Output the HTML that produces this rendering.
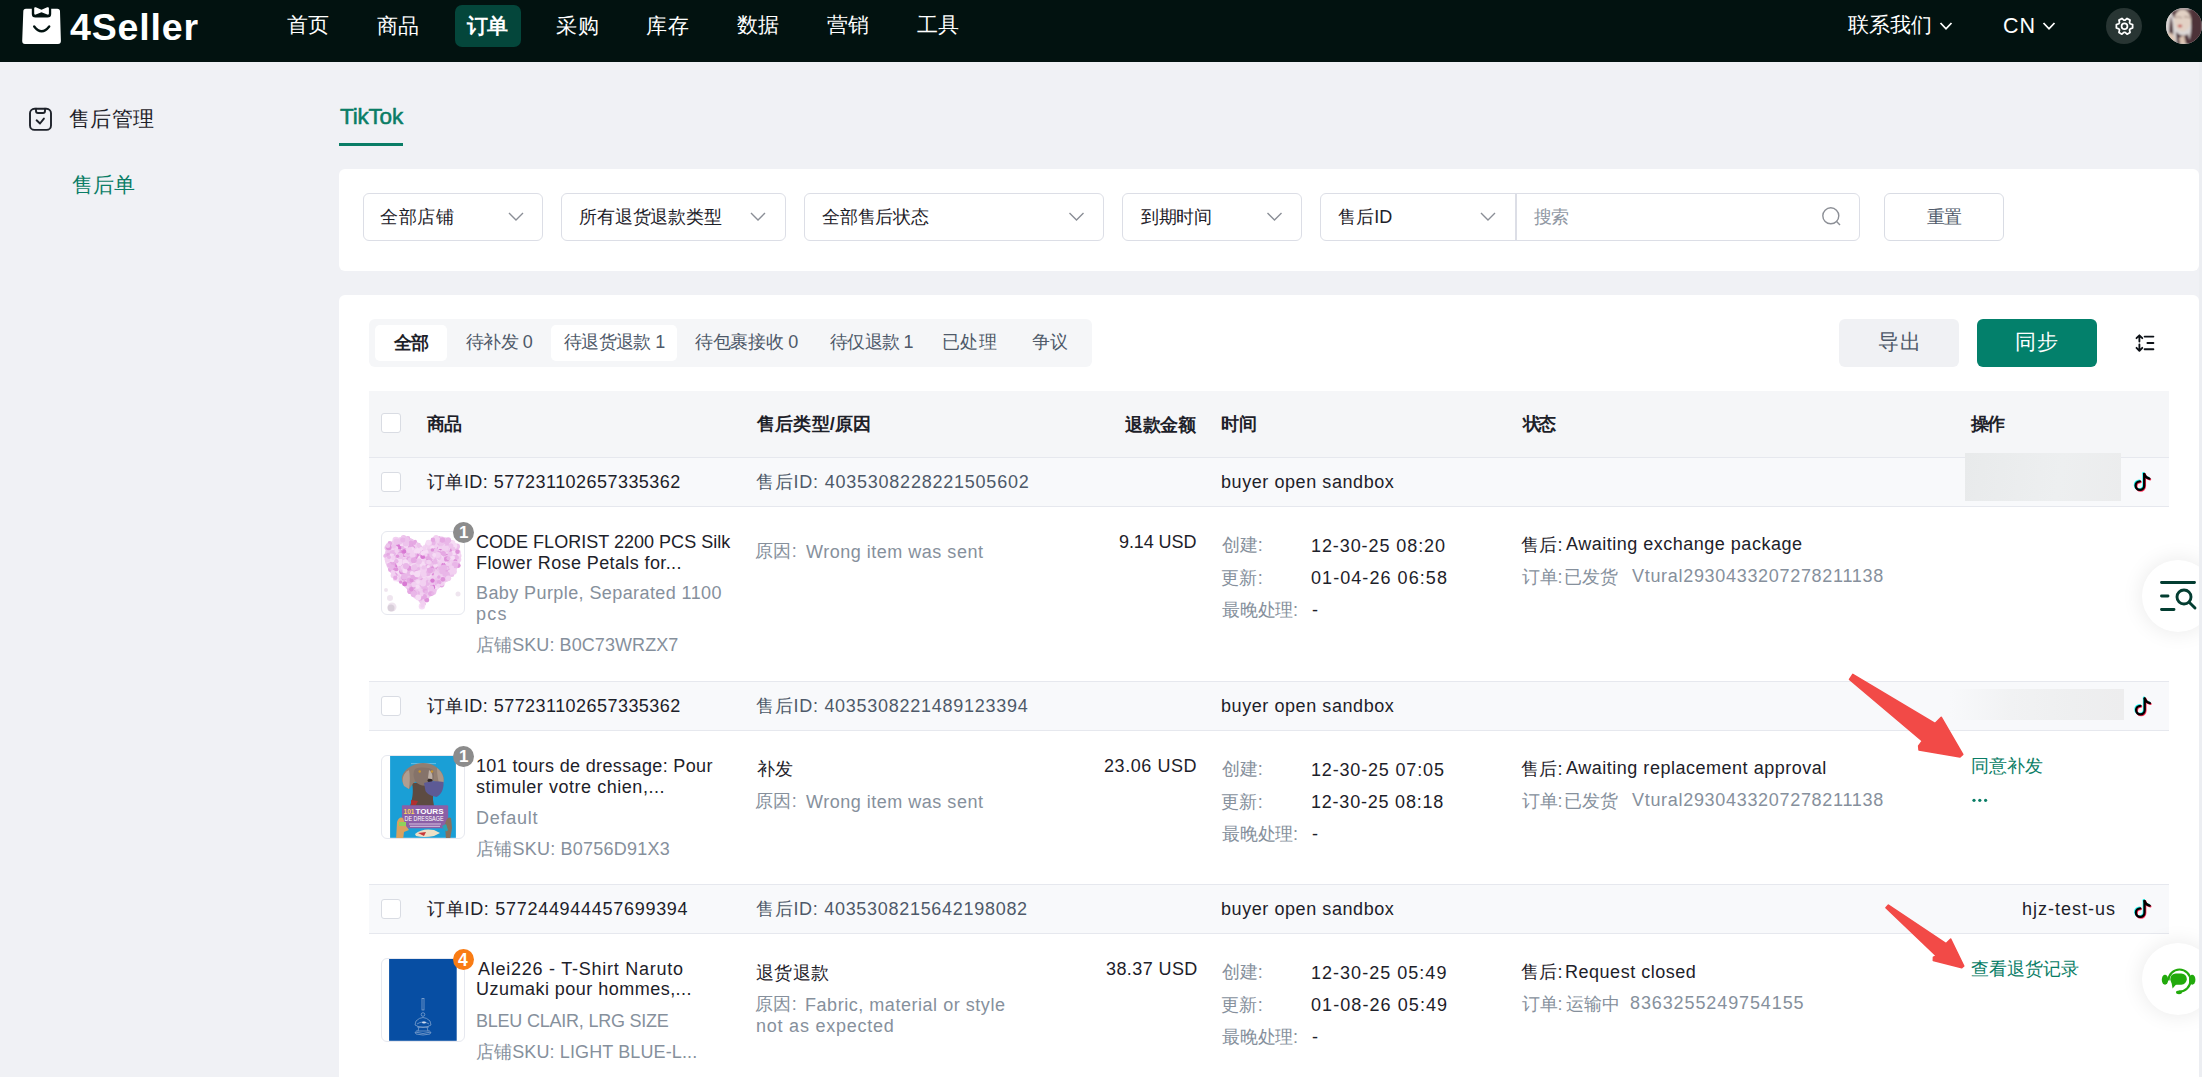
<!DOCTYPE html>
<html><head><meta charset="utf-8"><title>4Seller 售后单</title>
<style>
html,body{margin:0;padding:0}
body{width:2202px;height:1077px;overflow:hidden;position:relative;background:#f0f1f5;font-family:"Liberation Sans",sans-serif}
.a{position:absolute;box-sizing:border-box}
.t{position:absolute;white-space:pre;font-family:"Liberation Sans",sans-serif}
.sel{position:absolute;box-sizing:border-box;border:1.5px solid #dcdee6;border-radius:6px;background:#fff}
.cb{position:absolute;box-sizing:border-box;width:20px;height:20px;border:1px solid #d9dce3;border-radius:3px;background:#fff}
.chev{position:absolute}
</style></head><body>
<!-- NAV -->
<div class="a" style="left:0;top:0;width:2202px;height:62px;background:#021210"></div>
<div class="a" style="left:455px;top:5px;width:66px;height:42px;border-radius:7px;background:#04463b"></div>
<div class="a" style="left:2106px;top:8px;width:36px;height:36px;border-radius:50%;background:#283533"></div>
<div class="a" style="left:2166px;top:8px;width:36px;height:36px;border-radius:50%;overflow:hidden;background:#d6d0ce">
<svg width="36" height="36" viewBox="0 0 36 36" style="position:absolute;left:0;top:0">
<defs><filter id="avb"><feGaussianBlur stdDeviation="0.8"/></filter></defs>
<g filter="url(#avb)">
<rect x="0" y="0" width="36" height="36" fill="#dcd7d6"/>
<path d="M24 0 L36 0 L36 36 L22 36 Q26 24 25 14 Z" fill="#4d3139"/>
<path d="M5 4 Q14 -2 26 2 L26 10 Q16 6 8 10 Z" fill="#5a3c42"/>
<ellipse cx="16.5" cy="12.5" rx="8.5" ry="11" fill="#e2d1c4"/>
<path d="M5 8 Q8 20 7 30 L10 36 L4 36 Q2 20 5 8Z" fill="#4f343a"/>
<path d="M1 26 Q6 23 9 30 L8 36 L0 36 Z" fill="#e0c8b6"/>
<path d="M10 24 Q16 30 22 26 L24 36 L11 36 Z" fill="#4d3139"/>
<path d="M13 30 L18 27 L20 36 L14 36Z" fill="#dcc4b3"/>
<ellipse cx="14" cy="18" rx="2.2" ry="1.3" fill="#c0353b"/>
<path d="M9 9.5 Q13 8 16 10 M18 9 Q21 8 24 10" stroke="#8a7068" stroke-width=".8" fill="none"/>
</g></svg>
</div>

<!-- FILTER CARD -->
<div class="a" style="left:339px;top:169px;width:1860px;height:102px;border-radius:6px;background:#fff"></div>
<div class="sel" style="left:363px;top:193px;width:180px;height:48px"></div>
<div class="sel" style="left:561px;top:193px;width:225px;height:48px"></div>
<div class="sel" style="left:804px;top:193px;width:300px;height:48px"></div>
<div class="sel" style="left:1122px;top:193px;width:180px;height:48px"></div>
<div class="sel" style="left:1320px;top:193px;width:540px;height:48px"></div>
<div class="a" style="left:1515px;top:194px;width:1.5px;height:46px;background:#dcdee6"></div>
<div class="sel" style="left:1884px;top:193px;width:120px;height:48px;border-width:1px;border-color:#d9dce4"></div>
<div class="a" style="left:339px;top:143px;width:64px;height:3px;background:#0a7d66"></div>

<!-- MAIN CARD -->
<div class="a" style="left:339px;top:295px;width:1860px;height:800px;border-radius:6px;background:#fff"></div>
<div class="a" style="left:369px;top:319px;width:723px;height:48px;border-radius:6px;background:#f5f6f8"></div>
<div class="a" style="left:375px;top:325px;width:72px;height:36px;border-radius:5px;background:#fff"></div>
<div class="a" style="left:551px;top:325px;width:126px;height:36px;border-radius:5px;background:#fff"></div>
<div class="a" style="left:1839px;top:319px;width:120px;height:48px;border-radius:6px;background:#f0f1f4"></div>
<div class="a" style="left:1977px;top:319px;width:120px;height:48px;border-radius:6px;background:#03806b"></div>

<!-- TABLE -->
<div class="a" style="left:369px;top:391px;width:1800px;height:67px;background:#f5f6f8;border-bottom:1px solid #e6e8ee"></div>
<div class="a" style="left:369px;top:457px;width:1800px;height:50px;background:#f8f9fb;border-top:1px solid #e6e8ee;border-bottom:1px solid #e6e8ee"></div>
<div class="a" style="left:369px;top:681px;width:1800px;height:50px;background:#f8f9fb;border-top:1px solid #e6e8ee;border-bottom:1px solid #e6e8ee"></div>
<div class="a" style="left:369px;top:884px;width:1800px;height:50px;background:#f8f9fb;border-top:1px solid #e6e8ee;border-bottom:1px solid #e6e8ee"></div>
<div class="cb" style="left:381px;top:413px"></div>
<div class="cb" style="left:381px;top:472px"></div>
<div class="cb" style="left:381px;top:696px"></div>
<div class="cb" style="left:381px;top:899px"></div>
<!-- blurred shop names -->
<div class="a" style="left:1965px;top:453px;width:156px;height:48px;background:linear-gradient(100deg,#e8eaeb,#edeff0 60%,#ebeced)"></div>
<div class="a" style="left:1950px;top:689px;width:174px;height:31px;background:linear-gradient(90deg,rgba(240,241,242,0),#f1f2f3 35%,#eeeff0 70%,#ededee)"></div>

<!-- product images -->
<div class="a" style="left:381px;top:531px;width:84px;height:84px;border:1px solid #e6e8ef;border-radius:6px;background:#fff;overflow:hidden">
<svg width="84" height="84" viewBox="0 0 84 84" style="position:absolute;left:0;top:0">
<defs><filter id="hb" x="-10%" y="-10%" width="120%" height="120%"><feGaussianBlur stdDeviation="0.55"/></filter></defs>
<g filter="url(#hb)"><path d="M40.5 22.2 L40.6 22.2 L40.6 22.2 L40.6 22.1 L40.6 22.0 L40.6 21.9 L40.6 21.7 L40.6 21.6 L40.6 21.4 L40.7 21.2 L40.7 21.0 L40.7 20.7 L40.8 20.4 L40.9 20.1 L40.9 19.8 L41.0 19.5 L41.1 19.1 L41.2 18.8 L41.4 18.4 L41.5 18.0 L41.7 17.6 L41.8 17.2 L42.0 16.7 L42.2 16.3 L42.4 15.8 L42.7 15.4 L42.9 14.9 L43.2 14.5 L43.5 14.0 L43.8 13.5 L44.1 13.1 L44.4 12.6 L44.8 12.1 L45.2 11.7 L45.6 11.2 L46.0 10.7 L46.4 10.3 L46.8 9.9 L47.3 9.4 L47.8 9.0 L48.3 8.6 L48.8 8.2 L49.3 7.9 L49.9 7.5 L50.4 7.2 L51.0 6.9 L51.6 6.6 L52.1 6.3 L52.8 6.0 L53.4 5.8 L54.0 5.6 L54.6 5.4 L55.3 5.2 L55.9 5.1 L56.6 5.0 L57.3 4.9 L58.0 4.8 L58.6 4.8 L59.3 4.8 L60.0 4.8 L60.7 4.9 L61.4 4.9 L62.1 5.0 L62.8 5.2 L63.5 5.3 L64.1 5.5 L64.8 5.7 L65.5 5.9 L66.2 6.2 L66.8 6.5 L67.5 6.8 L68.1 7.1 L68.7 7.5 L69.4 7.9 L70.0 8.3 L70.6 8.7 L71.1 9.2 L71.7 9.7 L72.2 10.2 L72.8 10.7 L73.3 11.2 L73.8 11.8 L74.2 12.3 L74.7 12.9 L75.1 13.5 L75.5 14.2 L75.9 14.8 L76.3 15.4 L76.6 16.1 L76.9 16.8 L77.2 17.5 L77.5 18.1 L77.7 18.9 L77.9 19.6 L78.1 20.3 L78.2 21.0 L78.4 21.7 L78.5 22.5 L78.5 23.2 L78.6 24.0 L78.6 24.7 L78.6 25.5 L78.5 26.2 L78.5 27.0 L78.4 27.7 L78.2 28.5 L78.1 29.2 L77.9 30.0 L77.7 30.7 L77.5 31.5 L77.2 32.2 L76.9 33.0 L76.6 33.7 L76.3 34.5 L75.9 35.2 L75.5 35.9 L75.1 36.7 L74.7 37.4 L74.2 38.1 L73.8 38.8 L73.3 39.5 L72.8 40.3 L72.2 41.0 L71.7 41.7 L71.1 42.3 L70.6 43.0 L70.0 43.7 L69.4 44.4 L68.7 45.1 L68.1 45.7 L67.5 46.4 L66.8 47.1 L66.2 47.7 L65.5 48.4 L64.8 49.0 L64.1 49.7 L63.5 50.3 L62.8 50.9 L62.1 51.6 L61.4 52.2 L60.7 52.8 L60.0 53.5 L59.3 54.1 L58.6 54.7 L58.0 55.3 L57.3 55.9 L56.6 56.5 L55.9 57.1 L55.3 57.7 L54.6 58.3 L54.0 58.9 L53.4 59.5 L52.8 60.1 L52.1 60.7 L51.6 61.2 L51.0 61.8 L50.4 62.4 L49.9 62.9 L49.3 63.5 L48.8 64.1 L48.3 64.6 L47.8 65.2 L47.3 65.7 L46.8 66.2 L46.4 66.7 L46.0 67.3 L45.6 67.8 L45.2 68.3 L44.8 68.8 L44.4 69.2 L44.1 69.7 L43.8 70.2 L43.5 70.6 L43.2 71.1 L42.9 71.5 L42.7 71.9 L42.4 72.3 L42.2 72.7 L42.0 73.1 L41.8 73.5 L41.7 73.8 L41.5 74.2 L41.4 74.5 L41.2 74.8 L41.1 75.1 L41.0 75.4 L40.9 75.7 L40.9 75.9 L40.8 76.1 L40.7 76.4 L40.7 76.6 L40.7 76.7 L40.6 76.9 L40.6 77.0 L40.6 77.2 L40.6 77.3 L40.6 77.3 L40.6 77.4 L40.6 77.5 L40.6 77.5 L40.5 77.5 L40.5 77.5 L40.5 77.5 L40.5 77.4 L40.5 77.3 L40.5 77.3 L40.5 77.2 L40.5 77.0 L40.5 76.9 L40.4 76.7 L40.4 76.6 L40.4 76.4 L40.3 76.1 L40.2 75.9 L40.2 75.7 L40.1 75.4 L40.0 75.1 L39.9 74.8 L39.7 74.5 L39.6 74.2 L39.4 73.8 L39.3 73.5 L39.1 73.1 L38.9 72.7 L38.7 72.3 L38.4 71.9 L38.2 71.5 L37.9 71.1 L37.6 70.6 L37.3 70.2 L37.0 69.7 L36.7 69.2 L36.3 68.8 L35.9 68.3 L35.5 67.8 L35.1 67.3 L34.7 66.7 L34.3 66.2 L33.8 65.7 L33.3 65.2 L32.8 64.6 L32.3 64.1 L31.8 63.5 L31.2 62.9 L30.7 62.4 L30.1 61.8 L29.5 61.2 L29.0 60.7 L28.3 60.1 L27.7 59.5 L27.1 58.9 L26.5 58.3 L25.8 57.7 L25.2 57.1 L24.5 56.5 L23.8 55.9 L23.1 55.3 L22.5 54.7 L21.8 54.1 L21.1 53.5 L20.4 52.8 L19.7 52.2 L19.0 51.6 L18.3 50.9 L17.6 50.3 L17.0 49.7 L16.3 49.0 L15.6 48.4 L14.9 47.7 L14.3 47.1 L13.6 46.4 L13.0 45.7 L12.4 45.1 L11.7 44.4 L11.1 43.7 L10.5 43.0 L10.0 42.3 L9.4 41.7 L8.9 41.0 L8.3 40.3 L7.8 39.5 L7.3 38.8 L6.9 38.1 L6.4 37.4 L6.0 36.7 L5.6 35.9 L5.2 35.2 L4.8 34.5 L4.5 33.7 L4.2 33.0 L3.9 32.2 L3.6 31.5 L3.4 30.7 L3.2 30.0 L3.0 29.2 L2.9 28.5 L2.7 27.7 L2.6 27.0 L2.6 26.2 L2.5 25.5 L2.5 24.7 L2.5 24.0 L2.6 23.2 L2.6 22.5 L2.7 21.7 L2.9 21.0 L3.0 20.3 L3.2 19.6 L3.4 18.9 L3.6 18.1 L3.9 17.5 L4.2 16.8 L4.5 16.1 L4.8 15.4 L5.2 14.8 L5.6 14.2 L6.0 13.5 L6.4 12.9 L6.9 12.3 L7.3 11.8 L7.8 11.2 L8.3 10.7 L8.9 10.2 L9.4 9.7 L10.0 9.2 L10.5 8.7 L11.1 8.3 L11.7 7.9 L12.4 7.5 L13.0 7.1 L13.6 6.8 L14.3 6.5 L14.9 6.2 L15.6 5.9 L16.3 5.7 L17.0 5.5 L17.6 5.3 L18.3 5.2 L19.0 5.0 L19.7 4.9 L20.4 4.9 L21.1 4.8 L21.8 4.8 L22.5 4.8 L23.1 4.8 L23.8 4.9 L24.5 5.0 L25.2 5.1 L25.8 5.2 L26.5 5.4 L27.1 5.6 L27.7 5.8 L28.3 6.0 L29.0 6.3 L29.5 6.6 L30.1 6.9 L30.7 7.2 L31.2 7.5 L31.8 7.9 L32.3 8.2 L32.8 8.6 L33.3 9.0 L33.8 9.4 L34.3 9.9 L34.7 10.3 L35.1 10.7 L35.5 11.2 L35.9 11.7 L36.3 12.1 L36.7 12.6 L37.0 13.1 L37.3 13.5 L37.6 14.0 L37.9 14.5 L38.2 14.9 L38.4 15.4 L38.7 15.8 L38.9 16.3 L39.1 16.7 L39.3 17.2 L39.4 17.6 L39.6 18.0 L39.7 18.4 L39.9 18.8 L40.0 19.1 L40.1 19.5 L40.2 19.8 L40.2 20.1 L40.3 20.4 L40.4 20.7 L40.4 21.0 L40.4 21.2 L40.5 21.4 L40.5 21.6 L40.5 21.7 L40.5 21.9 L40.5 22.0 L40.5 22.1 L40.5 22.2 L40.5 22.2Z" fill="#efcdee"/><circle cx="27.1" cy="15.8" r="2.7" fill="#f6dcf5"/><circle cx="43.3" cy="31.4" r="1.7" fill="#edc3ec"/><circle cx="7.8" cy="11.4" r="2.3" fill="#e5a8e3"/><circle cx="11.9" cy="21.0" r="2.7" fill="#de92da"/><circle cx="46.4" cy="33.6" r="3.3" fill="#f6dcf5"/><circle cx="67.8" cy="25.9" r="1.8" fill="#f6dcf5"/><circle cx="16.3" cy="47.1" r="2.7" fill="#f2d0f1"/><circle cx="7.0" cy="19.8" r="2.8" fill="#edc3ec"/><circle cx="26.4" cy="47.4" r="2.4" fill="#f2d0f1"/><circle cx="21.1" cy="46.6" r="2.5" fill="#e5a8e3"/><circle cx="58.0" cy="25.7" r="3.3" fill="#f6dcf5"/><circle cx="34.3" cy="59.8" r="1.9" fill="#edc3ec"/><circle cx="60.7" cy="46.5" r="3.1" fill="#f2d0f1"/><circle cx="55.4" cy="48.0" r="2.6" fill="#edc3ec"/><circle cx="38.6" cy="53.1" r="1.7" fill="#e9b6e8"/><circle cx="65.0" cy="25.5" r="2.3" fill="#e9b6e8"/><circle cx="15.3" cy="13.3" r="1.7" fill="#e9b6e8"/><circle cx="12.3" cy="22.8" r="2.3" fill="#e5a8e3"/><circle cx="8.6" cy="37.5" r="2.5" fill="#e5a8e3"/><circle cx="23.7" cy="35.0" r="2.2" fill="#e5a8e3"/><circle cx="75.4" cy="15.8" r="1.9" fill="#f2d0f1"/><circle cx="20.3" cy="40.1" r="2.6" fill="#f2d0f1"/><circle cx="30.6" cy="46.0" r="3.2" fill="#e9b6e8"/><circle cx="41.7" cy="49.7" r="2.7" fill="#f6dcf5"/><circle cx="32.4" cy="33.8" r="1.8" fill="#e9b6e8"/><circle cx="18.4" cy="16.6" r="2.2" fill="#f6dcf5"/><circle cx="10.2" cy="31.2" r="1.6" fill="#e5a8e3"/><circle cx="49.2" cy="15.6" r="2.0" fill="#f2d0f1"/><circle cx="30.2" cy="13.7" r="3.0" fill="#d879d3"/><circle cx="38.0" cy="40.0" r="1.7" fill="#f6dcf5"/><circle cx="28.6" cy="24.0" r="3.0" fill="#f6dcf5"/><circle cx="42.7" cy="15.5" r="2.5" fill="#f6dcf5"/><circle cx="22.4" cy="31.5" r="1.9" fill="#e9b6e8"/><circle cx="43.0" cy="61.4" r="2.2" fill="#f2d0f1"/><circle cx="19.8" cy="42.4" r="2.2" fill="#f6dcf5"/><circle cx="4.6" cy="25.1" r="2.0" fill="#e9b6e8"/><circle cx="75.2" cy="31.3" r="2.0" fill="#f2d0f1"/><circle cx="17.5" cy="19.7" r="2.7" fill="#de92da"/><circle cx="66.5" cy="39.7" r="2.7" fill="#e5a8e3"/><circle cx="59.6" cy="39.6" r="1.9" fill="#e5a8e3"/><circle cx="76.4" cy="33.6" r="2.3" fill="#de92da"/><circle cx="57.7" cy="17.2" r="1.8" fill="#f6dcf5"/><circle cx="29.2" cy="44.7" r="1.8" fill="#f6dcf5"/><circle cx="65.4" cy="20.1" r="2.0" fill="#f2d0f1"/><circle cx="20.8" cy="47.4" r="2.0" fill="#edc3ec"/><circle cx="29.4" cy="38.1" r="2.6" fill="#de92da"/><circle cx="40.7" cy="43.5" r="2.5" fill="#f6dcf5"/><circle cx="36.0" cy="18.1" r="1.6" fill="#e5a8e3"/><circle cx="15.6" cy="39.2" r="2.8" fill="#edc3ec"/><circle cx="27.3" cy="42.5" r="2.5" fill="#e9b6e8"/><circle cx="21.4" cy="24.9" r="2.9" fill="#edc3ec"/><circle cx="45.2" cy="60.1" r="3.2" fill="#edc3ec"/><circle cx="49.1" cy="41.6" r="2.5" fill="#e9b6e8"/><circle cx="36.9" cy="43.6" r="2.4" fill="#de92da"/><circle cx="74.2" cy="23.7" r="2.6" fill="#de92da"/><circle cx="66.4" cy="14.8" r="1.8" fill="#edc3ec"/><circle cx="8.0" cy="22.3" r="1.7" fill="#e9b6e8"/><circle cx="52.7" cy="15.2" r="3.1" fill="#d879d3"/><circle cx="32.8" cy="40.2" r="3.3" fill="#e5a8e3"/><circle cx="14.8" cy="36.2" r="2.5" fill="#f2d0f1"/><circle cx="17.4" cy="28.0" r="2.8" fill="#f6dcf5"/><circle cx="44.7" cy="36.8" r="1.6" fill="#f2d0f1"/><circle cx="50.0" cy="42.0" r="1.7" fill="#d879d3"/><circle cx="10.5" cy="24.1" r="1.7" fill="#e9b6e8"/><circle cx="23.1" cy="14.2" r="2.3" fill="#de92da"/><circle cx="64.8" cy="23.6" r="1.9" fill="#de92da"/><circle cx="45.9" cy="55.7" r="1.8" fill="#f6dcf5"/><circle cx="54.9" cy="35.7" r="1.7" fill="#de92da"/><circle cx="37.0" cy="29.5" r="2.5" fill="#de92da"/><circle cx="22.9" cy="14.2" r="2.5" fill="#f2d0f1"/><circle cx="10.8" cy="16.5" r="1.7" fill="#f2d0f1"/><circle cx="26.2" cy="27.0" r="2.9" fill="#f2d0f1"/><circle cx="21.6" cy="5.9" r="2.8" fill="#edc3ec"/><circle cx="16.9" cy="39.3" r="3.2" fill="#f6dcf5"/><circle cx="64.8" cy="36.2" r="2.4" fill="#e5a8e3"/><circle cx="32.4" cy="41.6" r="2.8" fill="#d879d3"/><circle cx="56.3" cy="51.0" r="2.3" fill="#f2d0f1"/><circle cx="6.6" cy="14.2" r="1.7" fill="#e9b6e8"/><circle cx="22.0" cy="16.7" r="1.7" fill="#e5a8e3"/><circle cx="24.0" cy="22.4" r="2.1" fill="#edc3ec"/><circle cx="14.5" cy="37.2" r="2.0" fill="#de92da"/><circle cx="26.1" cy="30.7" r="1.6" fill="#f2d0f1"/><circle cx="38.6" cy="41.4" r="1.9" fill="#edc3ec"/><circle cx="2.9" cy="24.0" r="1.8" fill="#edc3ec"/><circle cx="25.7" cy="21.7" r="2.6" fill="#edc3ec"/><circle cx="59.6" cy="52.6" r="2.8" fill="#e5a8e3"/><circle cx="32.1" cy="28.5" r="3.3" fill="#f6dcf5"/><circle cx="57.6" cy="51.6" r="1.7" fill="#e5a8e3"/><circle cx="13.1" cy="42.9" r="2.5" fill="#e5a8e3"/><circle cx="54.5" cy="55.2" r="2.0" fill="#f6dcf5"/><circle cx="12.6" cy="31.0" r="1.8" fill="#e5a8e3"/><circle cx="45.0" cy="50.4" r="2.7" fill="#e9b6e8"/><circle cx="40.8" cy="43.7" r="2.7" fill="#f6dcf5"/><circle cx="58.6" cy="23.1" r="1.7" fill="#f2d0f1"/><circle cx="58.0" cy="19.7" r="2.9" fill="#d879d3"/><circle cx="40.1" cy="32.6" r="2.4" fill="#e9b6e8"/><circle cx="60.9" cy="49.7" r="2.7" fill="#f6dcf5"/><circle cx="13.7" cy="23.3" r="2.9" fill="#f2d0f1"/><circle cx="7.1" cy="24.3" r="2.7" fill="#e9b6e8"/><circle cx="53.9" cy="25.9" r="2.5" fill="#edc3ec"/><circle cx="70.5" cy="19.3" r="3.3" fill="#de92da"/><circle cx="36.7" cy="24.3" r="2.0" fill="#de92da"/><circle cx="18.5" cy="47.1" r="1.8" fill="#edc3ec"/><circle cx="75.0" cy="14.4" r="3.0" fill="#edc3ec"/><circle cx="36.8" cy="26.8" r="1.8" fill="#f2d0f1"/><circle cx="66.4" cy="13.5" r="3.2" fill="#e9b6e8"/><circle cx="71.1" cy="25.9" r="2.2" fill="#f2d0f1"/><circle cx="29.9" cy="35.9" r="2.1" fill="#f6dcf5"/><circle cx="21.5" cy="24.1" r="2.5" fill="#f2d0f1"/><circle cx="57.3" cy="8.4" r="2.8" fill="#edc3ec"/><circle cx="59.8" cy="51.7" r="2.1" fill="#f6dcf5"/><circle cx="73.0" cy="14.1" r="2.4" fill="#f2d0f1"/><circle cx="76.8" cy="23.7" r="2.7" fill="#f2d0f1"/><circle cx="44.9" cy="33.5" r="1.9" fill="#f6dcf5"/><circle cx="40.3" cy="20.8" r="3.1" fill="#d879d3"/><circle cx="36.7" cy="14.9" r="1.9" fill="#f6dcf5"/><circle cx="28.5" cy="11.4" r="2.0" fill="#f2d0f1"/><circle cx="59.5" cy="34.8" r="2.3" fill="#edc3ec"/><circle cx="31.2" cy="29.4" r="1.7" fill="#f2d0f1"/><circle cx="40.8" cy="50.6" r="3.1" fill="#f2d0f1"/><circle cx="23.1" cy="22.9" r="2.3" fill="#edc3ec"/><circle cx="70.7" cy="39.2" r="2.6" fill="#f6dcf5"/><circle cx="76.5" cy="22.9" r="1.8" fill="#f6dcf5"/><circle cx="42.3" cy="54.4" r="3.2" fill="#e9b6e8"/><circle cx="51.8" cy="60.4" r="2.4" fill="#edc3ec"/><circle cx="51.6" cy="26.9" r="1.8" fill="#f2d0f1"/><circle cx="50.9" cy="55.6" r="1.8" fill="#f6dcf5"/><circle cx="42.4" cy="47.2" r="2.3" fill="#f2d0f1"/><circle cx="25.4" cy="38.3" r="3.2" fill="#e9b6e8"/><circle cx="69.8" cy="39.4" r="2.0" fill="#f2d0f1"/><circle cx="25.9" cy="6.4" r="2.4" fill="#e9b6e8"/><circle cx="34.5" cy="23.5" r="2.7" fill="#de92da"/><circle cx="19.8" cy="7.3" r="2.2" fill="#edc3ec"/><circle cx="54.4" cy="19.2" r="3.0" fill="#e9b6e8"/><circle cx="76.3" cy="27.5" r="3.0" fill="#f2d0f1"/><circle cx="19.5" cy="35.1" r="2.7" fill="#de92da"/><circle cx="13.6" cy="33.4" r="2.0" fill="#d879d3"/><circle cx="13.3" cy="8.6" r="1.7" fill="#edc3ec"/><circle cx="73.4" cy="28.7" r="1.9" fill="#de92da"/><circle cx="59.3" cy="7.1" r="2.7" fill="#f2d0f1"/><circle cx="31.0" cy="28.9" r="1.9" fill="#f6dcf5"/><circle cx="23.8" cy="30.4" r="3.2" fill="#f6dcf5"/><circle cx="75.9" cy="19.9" r="2.2" fill="#e5a8e3"/><circle cx="65.1" cy="36.2" r="1.7" fill="#edc3ec"/><circle cx="17.2" cy="31.3" r="3.1" fill="#f6dcf5"/><circle cx="33.8" cy="63.8" r="2.9" fill="#f6dcf5"/><circle cx="72.5" cy="23.5" r="2.9" fill="#e5a8e3"/><circle cx="28.3" cy="24.6" r="3.2" fill="#edc3ec"/><circle cx="26.6" cy="24.8" r="1.6" fill="#e9b6e8"/><circle cx="20.3" cy="39.3" r="3.2" fill="#de92da"/><circle cx="31.9" cy="23.1" r="2.3" fill="#edc3ec"/><circle cx="73.1" cy="18.1" r="3.0" fill="#e9b6e8"/><circle cx="48.7" cy="28.6" r="2.1" fill="#f2d0f1"/><circle cx="62.0" cy="10.5" r="1.9" fill="#e9b6e8"/><circle cx="21.3" cy="9.5" r="1.7" fill="#edc3ec"/><circle cx="22.7" cy="10.9" r="1.8" fill="#edc3ec"/><circle cx="56.5" cy="37.3" r="2.0" fill="#edc3ec"/><circle cx="49.7" cy="53.8" r="2.9" fill="#e5a8e3"/><circle cx="53.1" cy="13.6" r="3.0" fill="#f2d0f1"/><circle cx="45.6" cy="31.9" r="2.9" fill="#f2d0f1"/><circle cx="21.3" cy="22.6" r="1.9" fill="#e5a8e3"/><circle cx="46.5" cy="28.5" r="2.3" fill="#d879d3"/><circle cx="41.1" cy="21.6" r="3.0" fill="#e9b6e8"/><circle cx="38.6" cy="64.3" r="3.0" fill="#de92da"/><circle cx="5.6" cy="26.2" r="1.8" fill="#f2d0f1"/><circle cx="73.3" cy="31.9" r="3.1" fill="#edc3ec"/><circle cx="47.9" cy="49.9" r="2.0" fill="#f2d0f1"/><circle cx="13.3" cy="19.6" r="2.0" fill="#edc3ec"/><circle cx="52.1" cy="19.6" r="1.6" fill="#f2d0f1"/><circle cx="54.1" cy="18.3" r="2.1" fill="#f2d0f1"/><circle cx="63.0" cy="44.6" r="1.7" fill="#f6dcf5"/><circle cx="32.6" cy="44.8" r="2.7" fill="#f6dcf5"/><circle cx="33.7" cy="25.4" r="2.1" fill="#de92da"/><circle cx="26.3" cy="46.0" r="2.2" fill="#edc3ec"/><circle cx="30.2" cy="19.1" r="2.8" fill="#f2d0f1"/><circle cx="34.7" cy="64.4" r="2.3" fill="#e5a8e3"/><circle cx="37.6" cy="16.6" r="1.6" fill="#edc3ec"/><circle cx="30.7" cy="41.5" r="1.8" fill="#f2d0f1"/><circle cx="42.2" cy="72.1" r="1.8" fill="#edc3ec"/><circle cx="17.5" cy="14.0" r="3.2" fill="#d879d3"/><circle cx="73.0" cy="33.0" r="3.1" fill="#e9b6e8"/><circle cx="65.2" cy="16.5" r="2.9" fill="#f2d0f1"/><circle cx="65.6" cy="18.1" r="2.0" fill="#edc3ec"/><circle cx="41.9" cy="32.7" r="1.8" fill="#f2d0f1"/><circle cx="60.1" cy="7.6" r="3.0" fill="#f6dcf5"/><circle cx="48.1" cy="44.8" r="2.7" fill="#f2d0f1"/><circle cx="34.5" cy="47.2" r="2.3" fill="#e9b6e8"/><circle cx="36.5" cy="36.7" r="1.6" fill="#e9b6e8"/><circle cx="39.8" cy="21.9" r="2.9" fill="#e9b6e8"/><circle cx="37.4" cy="17.9" r="2.4" fill="#f6dcf5"/><circle cx="12.3" cy="36.1" r="1.8" fill="#edc3ec"/><circle cx="50.9" cy="10.8" r="2.8" fill="#e9b6e8"/><circle cx="40.8" cy="32.3" r="3.2" fill="#f6dcf5"/><circle cx="39.9" cy="74.3" r="3.2" fill="#f6dcf5"/><circle cx="7.5" cy="30.3" r="2.9" fill="#f6dcf5"/><circle cx="70.7" cy="24.8" r="3.0" fill="#f6dcf5"/><circle cx="40.7" cy="71.7" r="2.0" fill="#f2d0f1"/><circle cx="41.0" cy="28.0" r="1.7" fill="#f2d0f1"/><circle cx="11.3" cy="43.4" r="2.7" fill="#f2d0f1"/><circle cx="50.4" cy="33.5" r="3.0" fill="#f2d0f1"/><circle cx="29.9" cy="60.4" r="2.4" fill="#f2d0f1"/><circle cx="59.1" cy="8.3" r="3.0" fill="#f2d0f1"/><circle cx="47.1" cy="53.1" r="2.1" fill="#f6dcf5"/><circle cx="5.1" cy="15.7" r="2.6" fill="#edc3ec"/><circle cx="41.5" cy="69.9" r="1.8" fill="#f2d0f1"/><circle cx="52.2" cy="6.4" r="1.6" fill="#f2d0f1"/><circle cx="10.6" cy="30.8" r="2.0" fill="#edc3ec"/><circle cx="47.3" cy="19.6" r="2.7" fill="#edc3ec"/><circle cx="21.0" cy="15.7" r="1.8" fill="#e9b6e8"/><circle cx="33.1" cy="24.0" r="1.6" fill="#e9b6e8"/><circle cx="45.3" cy="30.3" r="2.7" fill="#edc3ec"/><circle cx="33.4" cy="22.1" r="1.7" fill="#e9b6e8"/><circle cx="74.1" cy="15.1" r="1.9" fill="#edc3ec"/><circle cx="41.1" cy="51.4" r="3.0" fill="#f2d0f1"/><circle cx="26.0" cy="26.6" r="1.7" fill="#e5a8e3"/><circle cx="59.2" cy="38.6" r="2.9" fill="#edc3ec"/><circle cx="19.7" cy="12.5" r="2.0" fill="#f6dcf5"/><circle cx="28.0" cy="59.3" r="2.8" fill="#e5a8e3"/><circle cx="56.7" cy="24.1" r="2.5" fill="#edc3ec"/><circle cx="62.5" cy="42.8" r="2.1" fill="#e9b6e8"/><circle cx="75.9" cy="20.6" r="3.1" fill="#f6dcf5"/><circle cx="22.3" cy="22.0" r="2.9" fill="#de92da"/><circle cx="59.3" cy="28.6" r="3.1" fill="#f2d0f1"/><circle cx="50.5" cy="55.2" r="2.7" fill="#d879d3"/><circle cx="38.2" cy="65.8" r="2.8" fill="#e5a8e3"/><circle cx="35.8" cy="57.5" r="2.6" fill="#f2d0f1"/><circle cx="18.6" cy="50.1" r="1.7" fill="#de92da"/><circle cx="28.7" cy="15.1" r="1.6" fill="#f6dcf5"/><circle cx="55.2" cy="50.9" r="2.8" fill="#e9b6e8"/><circle cx="10.7" cy="19.8" r="1.8" fill="#f6dcf5"/><circle cx="50.6" cy="25.7" r="1.8" fill="#f6dcf5"/><circle cx="60.1" cy="19.7" r="2.1" fill="#edc3ec"/><circle cx="4.1" cy="23.5" r="2.1" fill="#e9b6e8"/><circle cx="30.5" cy="28.1" r="3.2" fill="#edc3ec"/><circle cx="35.7" cy="61.0" r="2.2" fill="#e9b6e8"/><circle cx="43.4" cy="20.5" r="3.1" fill="#f6dcf5"/><circle cx="64.9" cy="17.2" r="1.6" fill="#f2d0f1"/><circle cx="39.9" cy="62.7" r="1.9" fill="#edc3ec"/><circle cx="24.1" cy="20.4" r="2.8" fill="#edc3ec"/><circle cx="50.3" cy="30.7" r="2.3" fill="#edc3ec"/><circle cx="70.3" cy="11.1" r="3.1" fill="#f6dcf5"/><circle cx="18.2" cy="23.9" r="3.1" fill="#edc3ec"/><circle cx="20.3" cy="38.3" r="2.5" fill="#e9b6e8"/><circle cx="59.8" cy="51.8" r="2.2" fill="#f2d0f1"/><circle cx="52.9" cy="58.7" r="1.9" fill="#edc3ec"/><circle cx="61.4" cy="46.9" r="1.8" fill="#edc3ec"/><circle cx="69.9" cy="22.1" r="1.9" fill="#f2d0f1"/><circle cx="14.3" cy="16.1" r="2.0" fill="#f2d0f1"/><circle cx="42.2" cy="16.5" r="2.2" fill="#f2d0f1"/><circle cx="10.2" cy="32.7" r="3.3" fill="#e5a8e3"/><circle cx="58.3" cy="36.4" r="1.9" fill="#e9b6e8"/><circle cx="10.6" cy="19.8" r="2.3" fill="#f6dcf5"/><circle cx="32.9" cy="62.3" r="2.8" fill="#edc3ec"/><circle cx="50.6" cy="38.5" r="1.8" fill="#edc3ec"/><circle cx="33.3" cy="58.7" r="3.1" fill="#edc3ec"/><circle cx="46.2" cy="59.3" r="2.3" fill="#f2d0f1"/><circle cx="51.3" cy="37.8" r="2.1" fill="#e9b6e8"/><circle cx="9.9" cy="35.3" r="2.9" fill="#e9b6e8"/><circle cx="50.4" cy="23.0" r="2.3" fill="#edc3ec"/><circle cx="49.8" cy="34.6" r="2.7" fill="#de92da"/><circle cx="61.7" cy="33.1" r="2.4" fill="#d879d3"/><circle cx="43.7" cy="56.9" r="2.5" fill="#e9b6e8"/><circle cx="65.6" cy="42.7" r="2.3" fill="#de92da"/><circle cx="32.4" cy="60.2" r="1.8" fill="#d879d3"/><circle cx="29.6" cy="8.9" r="2.1" fill="#edc3ec"/><circle cx="34.5" cy="55.6" r="2.2" fill="#f2d0f1"/><circle cx="32.3" cy="20.2" r="1.8" fill="#e9b6e8"/><circle cx="38.2" cy="45.7" r="2.0" fill="#de92da"/><circle cx="29.4" cy="51.2" r="3.0" fill="#e5a8e3"/><circle cx="38.1" cy="26.2" r="2.5" fill="#f6dcf5"/><circle cx="65.9" cy="30.6" r="3.0" fill="#f2d0f1"/><circle cx="31.1" cy="23.2" r="2.3" fill="#f2d0f1"/><circle cx="23.9" cy="22.6" r="2.1" fill="#edc3ec"/><circle cx="35.1" cy="51.1" r="2.7" fill="#f2d0f1"/><circle cx="52.4" cy="23.0" r="1.8" fill="#f6dcf5"/><circle cx="28.9" cy="15.9" r="3.1" fill="#e5a8e3"/><circle cx="48.8" cy="61.6" r="2.7" fill="#e5a8e3"/><circle cx="42.9" cy="58.7" r="2.3" fill="#e5a8e3"/><circle cx="44.7" cy="24.0" r="2.0" fill="#f6dcf5"/><circle cx="38.0" cy="15.3" r="2.4" fill="#edc3ec"/><circle cx="43.6" cy="67.5" r="1.6" fill="#e5a8e3"/><circle cx="38.1" cy="45.7" r="2.7" fill="#e5a8e3"/><circle cx="31.0" cy="35.2" r="3.2" fill="#f6dcf5"/><circle cx="51.0" cy="51.0" r="1.6" fill="#edc3ec"/><circle cx="41.4" cy="40.0" r="3.1" fill="#f6dcf5"/><circle cx="57.2" cy="50.3" r="2.2" fill="#e5a8e3"/><circle cx="30.4" cy="39.3" r="2.5" fill="#e9b6e8"/><circle cx="18.5" cy="36.4" r="2.3" fill="#edc3ec"/><circle cx="65.4" cy="26.1" r="3.0" fill="#edc3ec"/><circle cx="40.8" cy="24.6" r="2.5" fill="#d879d3"/><circle cx="27.7" cy="27.9" r="2.1" fill="#edc3ec"/><circle cx="50.8" cy="61.8" r="1.7" fill="#e9b6e8"/><circle cx="6.3" cy="26.6" r="1.6" fill="#f2d0f1"/><circle cx="49.4" cy="50.4" r="2.8" fill="#edc3ec"/><circle cx="54.3" cy="20.2" r="2.7" fill="#edc3ec"/><circle cx="60.5" cy="12.2" r="1.9" fill="#f6dcf5"/><circle cx="52.4" cy="31.6" r="3.0" fill="#e5a8e3"/><circle cx="45.3" cy="23.6" r="2.1" fill="#edc3ec"/><circle cx="26.7" cy="36.1" r="2.7" fill="#de92da"/><circle cx="64.2" cy="46.6" r="3.2" fill="#edc3ec"/><circle cx="33.9" cy="12.2" r="2.7" fill="#f2d0f1"/><circle cx="57.2" cy="22.4" r="2.8" fill="#f2d0f1"/><circle cx="58.0" cy="10.9" r="2.7" fill="#e9b6e8"/><circle cx="57.1" cy="5.6" r="1.6" fill="#e9b6e8"/><circle cx="64.7" cy="10.6" r="2.1" fill="#e9b6e8"/><circle cx="30.5" cy="46.6" r="2.3" fill="#e9b6e8"/><circle cx="30.1" cy="51.7" r="2.7" fill="#edc3ec"/><circle cx="31.9" cy="62.0" r="3.2" fill="#e9b6e8"/><circle cx="45.6" cy="26.1" r="1.7" fill="#d879d3"/><circle cx="27.8" cy="48.8" r="3.3" fill="#e5a8e3"/><circle cx="48.2" cy="27.2" r="2.3" fill="#e5a8e3"/><circle cx="31.2" cy="54.6" r="2.6" fill="#e5a8e3"/><circle cx="63.9" cy="25.4" r="1.6" fill="#f2d0f1"/><circle cx="34.7" cy="47.4" r="3.0" fill="#e5a8e3"/><circle cx="46.0" cy="24.7" r="3.0" fill="#e5a8e3"/><circle cx="28.9" cy="11.0" r="2.5" fill="#e5a8e3"/><circle cx="73.4" cy="21.8" r="2.6" fill="#e9b6e8"/><circle cx="37.9" cy="19.8" r="2.0" fill="#e9b6e8"/><circle cx="62.7" cy="38.2" r="1.7" fill="#e5a8e3"/><circle cx="61.3" cy="21.7" r="2.6" fill="#e5a8e3"/><circle cx="69.9" cy="42.7" r="2.4" fill="#edc3ec"/><circle cx="16.9" cy="18.8" r="1.9" fill="#e9b6e8"/><circle cx="30.1" cy="45.8" r="2.3" fill="#edc3ec"/><circle cx="13.8" cy="8.0" r="3.3" fill="#f2d0f1"/><circle cx="62.4" cy="16.2" r="2.6" fill="#f2d0f1"/><circle cx="68.4" cy="40.2" r="2.6" fill="#f2d0f1"/><circle cx="61.8" cy="35.8" r="3.2" fill="#e9b6e8"/><circle cx="21.8" cy="7.6" r="1.9" fill="#f2d0f1"/><circle cx="44.9" cy="68.1" r="2.4" fill="#de92da"/><circle cx="48.0" cy="33.7" r="1.8" fill="#de92da"/><circle cx="22.1" cy="45.8" r="2.7" fill="#de92da"/><circle cx="53.5" cy="33.4" r="2.4" fill="#f6dcf5"/><circle cx="19.4" cy="7.6" r="2.0" fill="#f2d0f1"/><circle cx="66.2" cy="8.2" r="2.9" fill="#e9b6e8"/><circle cx="6.7" cy="15.3" r="2.9" fill="#de92da"/><circle cx="54.0" cy="26.5" r="2.6" fill="#e9b6e8"/><circle cx="10.5" cy="28.3" r="2.0" fill="#f6dcf5"/><circle cx="39.1" cy="17.1" r="2.0" fill="#f6dcf5"/><circle cx="54.1" cy="5.7" r="2.8" fill="#f2d0f1"/><circle cx="13.1" cy="37.3" r="1.8" fill="#de92da"/><circle cx="36.9" cy="29.5" r="3.0" fill="#edc3ec"/><circle cx="50.3" cy="15.2" r="2.0" fill="#f6dcf5"/><circle cx="56.8" cy="45.0" r="1.8" fill="#e5a8e3"/><circle cx="22.8" cy="34.7" r="1.9" fill="#f2d0f1"/><circle cx="66.4" cy="29.1" r="1.9" fill="#edc3ec"/><circle cx="53.4" cy="20.2" r="2.4" fill="#f2d0f1"/><circle cx="22.1" cy="19.5" r="2.2" fill="#d879d3"/><circle cx="9.9" cy="25.8" r="3.1" fill="#f6dcf5"/><circle cx="57.8" cy="26.1" r="3.3" fill="#f6dcf5"/><circle cx="63.9" cy="29.6" r="1.8" fill="#f6dcf5"/><circle cx="65.8" cy="43.1" r="1.9" fill="#edc3ec"/><circle cx="71.9" cy="20.7" r="2.6" fill="#f6dcf5"/><circle cx="56.7" cy="19.1" r="1.7" fill="#f6dcf5"/><circle cx="48.8" cy="40.8" r="2.1" fill="#f2d0f1"/><circle cx="49.1" cy="56.3" r="3.0" fill="#edc3ec"/><circle cx="17.9" cy="9.6" r="2.8" fill="#edc3ec"/><circle cx="57.4" cy="8.8" r="3.0" fill="#f2d0f1"/><circle cx="71.8" cy="39.4" r="3.1" fill="#f2d0f1"/><circle cx="30.4" cy="16.7" r="2.2" fill="#edc3ec"/><circle cx="36.4" cy="42.3" r="1.8" fill="#e9b6e8"/><circle cx="26.9" cy="56.5" r="2.2" fill="#e9b6e8"/><circle cx="41.6" cy="43.4" r="2.5" fill="#f6dcf5"/><circle cx="76.1" cy="21.1" r="1.9" fill="#f6dcf5"/><circle cx="55.7" cy="19.0" r="1.6" fill="#edc3ec"/><circle cx="46.4" cy="42.8" r="2.8" fill="#f6dcf5"/><circle cx="5.9" cy="13.7" r="2.4" fill="#edc3ec"/><circle cx="23.8" cy="13.7" r="2.3" fill="#f6dcf5"/><circle cx="13.7" cy="46.4" r="2.9" fill="#f6dcf5"/><circle cx="32.1" cy="35.4" r="3.0" fill="#edc3ec"/><circle cx="61.6" cy="29.4" r="2.0" fill="#f2d0f1"/><circle cx="21.5" cy="35.5" r="2.7" fill="#f2d0f1"/><circle cx="35.5" cy="41.5" r="1.6" fill="#f6dcf5"/><circle cx="51.3" cy="24.1" r="2.8" fill="#f2d0f1"/><circle cx="49.8" cy="23.0" r="2.5" fill="#edc3ec"/><circle cx="74.9" cy="25.7" r="2.1" fill="#e9b6e8"/><circle cx="22.9" cy="38.7" r="2.5" fill="#f6dcf5"/><circle cx="11.9" cy="14.4" r="2.1" fill="#edc3ec"/><circle cx="24.4" cy="22.5" r="1.7" fill="#edc3ec"/><circle cx="45.9" cy="52.1" r="1.9" fill="#e9b6e8"/><circle cx="37.6" cy="44.6" r="2.6" fill="#edc3ec"/><circle cx="26.1" cy="22.4" r="2.0" fill="#edc3ec"/><circle cx="31.7" cy="47.4" r="1.6" fill="#f2d0f1"/><circle cx="68.1" cy="22.1" r="2.5" fill="#edc3ec"/><circle cx="14.6" cy="9.7" r="3.1" fill="#edc3ec"/><circle cx="7.2" cy="33.0" r="2.3" fill="#e9b6e8"/><circle cx="10.8" cy="21.2" r="3.2" fill="#e9b6e8"/><circle cx="14.3" cy="29.3" r="2.2" fill="#e9b6e8"/><circle cx="65.0" cy="42.4" r="2.9" fill="#e9b6e8"/><circle cx="60.3" cy="39.3" r="2.9" fill="#e9b6e8"/><circle cx="72.1" cy="14.1" r="3.1" fill="#f6dcf5"/><circle cx="60.8" cy="47.4" r="2.4" fill="#de92da"/><circle cx="46.0" cy="35.2" r="2.9" fill="#e5a8e3"/><circle cx="48.7" cy="32.4" r="2.4" fill="#edc3ec"/><circle cx="57.5" cy="26.1" r="2.3" fill="#edc3ec"/><circle cx="31.8" cy="28.2" r="2.9" fill="#e5a8e3"/><circle cx="40.5" cy="37.1" r="1.9" fill="#f2d0f1"/><circle cx="46.8" cy="11.2" r="3.2" fill="#f2d0f1"/><circle cx="75.5" cy="19.7" r="2.3" fill="#de92da"/><circle cx="45.5" cy="41.0" r="3.2" fill="#e9b6e8"/><circle cx="41.9" cy="42.4" r="2.8" fill="#f2d0f1"/><circle cx="29.7" cy="48.0" r="2.2" fill="#de92da"/><circle cx="54.0" cy="43.0" r="1.8" fill="#f2d0f1"/><circle cx="33.0" cy="45.6" r="2.6" fill="#e5a8e3"/><circle cx="36.0" cy="50.2" r="3.3" fill="#f2d0f1"/><circle cx="42.8" cy="64.1" r="1.9" fill="#f2d0f1"/><circle cx="70.1" cy="35.4" r="1.9" fill="#f2d0f1"/><circle cx="41.4" cy="41.5" r="1.9" fill="#f2d0f1"/><circle cx="50.5" cy="48.6" r="2.2" fill="#d879d3"/><circle cx="50.9" cy="7.9" r="2.3" fill="#e5a8e3"/><circle cx="25.8" cy="55.0" r="1.6" fill="#f2d0f1"/><circle cx="53.3" cy="19.1" r="2.4" fill="#edc3ec"/><circle cx="22.7" cy="51.8" r="2.5" fill="#d879d3"/><circle cx="46.2" cy="34.7" r="1.8" fill="#f6dcf5"/><circle cx="60.3" cy="12.6" r="1.8" fill="#f2d0f1"/><circle cx="42.3" cy="64.6" r="2.6" fill="#e5a8e3"/><circle cx="61.1" cy="28.3" r="2.8" fill="#f2d0f1"/><circle cx="15.4" cy="24.2" r="1.8" fill="#de92da"/><circle cx="46.8" cy="30.2" r="2.4" fill="#f2d0f1"/><circle cx="36.0" cy="49.9" r="2.0" fill="#f6dcf5"/><circle cx="64.6" cy="26.9" r="2.6" fill="#de92da"/><circle cx="40.2" cy="73.8" r="2.0" fill="#f2d0f1"/><circle cx="57.2" cy="20.9" r="2.1" fill="#e5a8e3"/><circle cx="39.4" cy="62.4" r="2.0" fill="#f2d0f1"/><circle cx="29.8" cy="18.4" r="3.3" fill="#f2d0f1"/><circle cx="45.2" cy="13.2" r="2.5" fill="#f2d0f1"/><circle cx="33.2" cy="9.6" r="1.8" fill="#e5a8e3"/><circle cx="29.2" cy="22.6" r="1.9" fill="#f2d0f1"/><circle cx="20.5" cy="7.3" r="2.7" fill="#f2d0f1"/><circle cx="9.5" cy="24.4" r="3.0" fill="#f6dcf5"/><circle cx="36.2" cy="65.6" r="3.0" fill="#f6dcf5"/><circle cx="29.4" cy="57.3" r="2.2" fill="#de92da"/><circle cx="40.9" cy="21.3" r="2.4" fill="#f6dcf5"/><circle cx="56.3" cy="23.8" r="3.1" fill="#edc3ec"/><circle cx="30.5" cy="22.7" r="2.6" fill="#f2d0f1"/><circle cx="68.9" cy="13.7" r="2.5" fill="#edc3ec"/><circle cx="31.8" cy="52.6" r="2.6" fill="#f2d0f1"/><circle cx="32.2" cy="11.1" r="1.9" fill="#e5a8e3"/><circle cx="26.9" cy="53.0" r="1.8" fill="#edc3ec"/><circle cx="30.0" cy="41.2" r="2.1" fill="#f6dcf5"/><circle cx="26.2" cy="21.3" r="1.8" fill="#e9b6e8"/><circle cx="24.0" cy="34.1" r="3.1" fill="#e9b6e8"/><circle cx="12.6" cy="24.9" r="1.7" fill="#e9b6e8"/><circle cx="53.0" cy="30.3" r="2.3" fill="#e9b6e8"/><circle cx="55.7" cy="22.9" r="3.0" fill="#f2d0f1"/><circle cx="50.4" cy="18.0" r="1.8" fill="#de92da"/><circle cx="14.8" cy="19.2" r="2.1" fill="#f2d0f1"/><circle cx="5.5" cy="27.4" r="2.7" fill="#f2d0f1"/><circle cx="66.4" cy="46.3" r="2.8" fill="#f2d0f1"/><circle cx="35.6" cy="54.6" r="2.2" fill="#f6dcf5"/><circle cx="24.3" cy="7.9" r="3.1" fill="#edc3ec"/><circle cx="6.1" cy="22.6" r="1.8" fill="#e5a8e3"/><circle cx="59.5" cy="11.1" r="2.8" fill="#edc3ec"/><circle cx="23.9" cy="11.3" r="3.2" fill="#edc3ec"/><circle cx="50.3" cy="37.7" r="1.7" fill="#e9b6e8"/><circle cx="35.1" cy="42.0" r="3.2" fill="#f6dcf5"/><circle cx="60.5" cy="8.0" r="2.8" fill="#e5a8e3"/><circle cx="22.4" cy="44.5" r="3.2" fill="#e9b6e8"/><circle cx="43.9" cy="23.0" r="1.7" fill="#f2d0f1"/><circle cx="33.8" cy="19.4" r="2.1" fill="#f6dcf5"/><circle cx="56.3" cy="53.5" r="2.0" fill="#f2d0f1"/><circle cx="41.7" cy="37.2" r="3.2" fill="#f2d0f1"/><circle cx="13.3" cy="45.7" r="2.2" fill="#e5a8e3"/><circle cx="44.2" cy="60.1" r="1.9" fill="#e9b6e8"/><circle cx="48.1" cy="38.3" r="2.9" fill="#e5a8e3"/><circle cx="11.2" cy="25.8" r="2.2" fill="#f2d0f1"/><circle cx="7.1" cy="25.2" r="1.9" fill="#e9b6e8"/><circle cx="36.6" cy="13.0" r="2.2" fill="#edc3ec"/><circle cx="30.1" cy="17.0" r="1.7" fill="#f6dcf5"/><circle cx="10.8" cy="40.3" r="2.3" fill="#f2d0f1"/><circle cx="52.2" cy="23.1" r="2.0" fill="#f6dcf5"/><circle cx="66.4" cy="26.3" r="1.9" fill="#e9b6e8"/><circle cx="27.4" cy="18.2" r="3.0" fill="#f2d0f1"/><circle cx="30.5" cy="44.9" r="2.2" fill="#e5a8e3"/><circle cx="20.7" cy="7.8" r="2.6" fill="#e9b6e8"/><circle cx="40.1" cy="41.1" r="1.9" fill="#f2d0f1"/><circle cx="46.7" cy="10.6" r="2.8" fill="#f6dcf5"/><circle cx="35.9" cy="18.7" r="2.8" fill="#f6dcf5"/><circle cx="62.4" cy="35.7" r="2.1" fill="#e9b6e8"/><circle cx="41.7" cy="35.4" r="2.2" fill="#edc3ec"/><circle cx="71.3" cy="16.8" r="2.1" fill="#edc3ec"/></g>
<g fill="#e9dbe9" opacity=".7"><circle cx="10" cy="75" r="4.5"/><circle cx="8" cy="66" r="3"/><circle cx="76" cy="62" r="2.5"/><circle cx="4" cy="58" r="2"/></g>
<circle cx="9" cy="76" r="3.5" fill="#c9bfcb" opacity=".6"/>
</svg></div>
<div class="a" style="left:381px;top:755px;width:84px;height:84px;border:1px solid #e6e8ef;border-radius:6px;background:#fff;overflow:hidden">
<svg width="84" height="84" viewBox="0 0 84 84" style="position:absolute;left:0;top:0">
<defs><filter id="bb"><feGaussianBlur stdDeviation="0.5"/></filter></defs>
<rect x="8.1" y="0" width="65.8" height="81.8" fill="#1a9fd6"/>
<g>
<rect x="29" y="7.3" width="25" height=".8" fill="#bfe0f0" opacity=".6"/>
<path d="M30 27 C32 36 30 44 28 50 L52 50 C50 42 51 34 53 26 Z" fill="#5d4b41"/>
<path d="M41 7 C50 7 56 11 60 17 C63 22 62 28 58 31 L53 26 C49 22 34 22 30 29 L27 33 C21 30 18 23 21 18 C25 11 33 7 41 7 Z" fill="#917e71"/>
<path d="M27 14 C21 17 19 24 22 30 L27 33 C28 26 28 19 27 14Z" fill="#b09e91"/>
<path d="M55 12 C60 16 63 22 61 28 L58 31 C56 25 55 18 55 12Z" fill="#a99789"/>
<path d="M33 13 C38 11 46 11 51 14 C53 20 52 26 48 29 C42 31 36 29 33 25 C31 20 31 16 33 13Z" fill="#85736a"/>
<path d="M47 14 C50 16 51 20 50 24 L46 22 Z" fill="#c9bdb3" opacity=".8"/>
<circle cx="37.7" cy="15.5" r="1.2" fill="#c9952e"/><circle cx="50" cy="15.5" r="1.2" fill="#c9952e"/>
<ellipse cx="48" cy="24.5" rx="2.6" ry="1.8" fill="#2d2424"/>
<path d="M42 27 C48 25 56 25 61.5 26 C62 33 59 39 54.5 41 C49 40 45 38 43.5 35 Z" fill="#5d5a95"/>
<path d="M29 44 L36 45 L34 49 L29 49 Z" fill="#b03030"/>
<rect x="19.9" y="49.3" width="46.3" height="22.9" rx="1" fill="#8b5fa6"/>
<text x="21.5" y="57.6" font-family="Liberation Sans" font-weight="700" font-size="7.6" fill="#f8d85a" textLength="11" lengthAdjust="spacingAndGlyphs">101</text>
<text x="33.5" y="57.6" font-family="Liberation Sans" font-weight="700" font-size="7.6" fill="#ffffff" textLength="28" lengthAdjust="spacingAndGlyphs">TOURS</text>
<text x="22.5" y="64.8" font-family="Liberation Sans" font-size="6.4" fill="#ffffff" textLength="39" lengthAdjust="spacingAndGlyphs">DE DRESSAGE</text>
<rect x="27" y="67.5" width="32" height="1" fill="#e8dcf0" opacity=".8"/><rect x="28" y="69.8" width="30" height="1" fill="#e8dcf0" opacity=".8"/>
<path d="M14 84 L15 66 Q17 60 21 62 L24 70 L27 74 L22 76 L21 84 Z" fill="#d9a15e"/>
<rect x="17" y="66" width="7" height="4" fill="#8fd35a"/>
<path d="M33 78 Q40 72 52 74 L58 77 L52 80 Q42 82 34 80 Z" fill="#ece0c6"/>
<path d="M36 77 L44 76 L42 80 Z" fill="#c8383a"/>
<path d="M64 84 L63 68 Q65 60 69 62 L70 72 L68 84 Z" fill="#87705c"/>
<path d="M60 70 Q64 78 66 74 L64 68 Z" fill="#2ba3b5"/>
</g></svg></div>
<div class="a" style="left:381px;top:958px;width:84px;height:84px;border:1px solid #e6e8ef;border-radius:6px;background:#fff;overflow:hidden">
<svg width="84" height="84" viewBox="0 0 84 84" style="position:absolute;left:0;top:0">
<rect x="7.1" y="0" width="67.6" height="81.8" fill="#074ea3"/>
<g stroke="#9fb8da" stroke-width=".7" fill="none" opacity=".9">
<rect x="40" y="39.5" width="2" height="11.5"/>
<circle cx="41" cy="55.5" r="1.8"/>
<path d="M34 62 Q41 55 48 62 L49 66 Q41 71 33 66 Z"/>
<path d="M35 65 Q41 61 47 65"/>
<path d="M35 68 L47 68 M34 72 H48 M36 72 L37 68 M46 72 L45 68"/>
<path d="M33 73 Q41 76 49 73 L48 75 Q41 77 34 75Z"/>
</g>
<ellipse cx="42" cy="63.5" rx="2" ry="1" fill="#cfdcf0"/>
</svg></div>
<div class="a" style="left:453px;top:522px;width:21px;height:21px;border-radius:50%;background:#8c8c8c"></div>
<div class="a" style="left:453px;top:746px;width:21px;height:21px;border-radius:50%;background:#8c8c8c"></div>
<div class="a" style="left:453px;top:949px;width:21px;height:21px;border-radius:50%;background:#f97c14"></div>

<!-- float buttons -->
<div class="a" style="left:2142px;top:560px;width:72px;height:72px;border-radius:50%;background:#fff;box-shadow:0 0 22px rgba(0,0,0,.09)"></div>
<div class="a" style="left:2142px;top:943px;width:72px;height:72px;border-radius:50%;background:#fff;box-shadow:0 0 22px rgba(0,0,0,.09)"></div>
<div class="a" style="left:2199px;top:62px;width:3px;height:1015px;background:#eceef2"></div>

<svg class="a" width="2202" height="1077" style="left:0;top:0;pointer-events:none" viewBox="0 0 2202 1077">
<defs>
<symbol id="tt" viewBox="0 0 18 20" overflow="visible">
 <g fill="none" stroke-width="2.3" stroke-linecap="round">
  <g stroke="#25f4ee" transform="translate(-0.7,-0.7)"><path d="M11.2 1.8V13.6A4.3 4.3 0 1 1 6.9 9.3"/><path d="M11.2 2.2Q12.3 5.8 16.4 6.6"/></g>
  <g stroke="#fe2c55" transform="translate(0.7,0.7)"><path d="M11.2 1.8V13.6A4.3 4.3 0 1 1 6.9 9.3"/><path d="M11.2 2.2Q12.3 5.8 16.4 6.6"/></g>
  <g stroke="#000"><path d="M11.2 1.8V13.6A4.3 4.3 0 1 1 6.9 9.3"/><path d="M11.2 2.2Q12.3 5.8 16.4 6.6"/></g>
 </g>
</symbol>
</defs>
<!-- logo -->
<path d="M26 8.7 H31.8 V14 Q31.8 17.5 35.5 17.5 H47.5 Q51.2 17.5 51.2 14 V8.7 H57.2 Q60 8.7 60 11.5 L60.9 41 Q60.9 43.9 58 43.9 H25 Q22.2 43.9 22.2 41 L23.3 11.5 Q23.3 8.7 26 8.7Z" fill="#fff"/>
<path d="M34.2 8.2 Q34.2 6.8 35.8 7.3 L41.5 9.8 L47.3 7.3 Q48.9 6.8 48.9 8.2 V13.6 Q48.9 15 47.3 14.5 L41.5 12.2 L35.8 14.5 Q34.2 15 34.2 13.6Z" fill="#fff"/>
<path d="M34.2 26.4 Q41.6 36 49.2 26.4" fill="none" stroke="#021210" stroke-width="2.4" stroke-linecap="round"/>
<!-- nav chevrons -->
<path d="M1940.5 23 L1946 28.8 L1951.5 23" fill="none" stroke="#fff" stroke-width="1.8"/>
<path d="M2043.5 23 L2049 28.8 L2054.5 23" fill="none" stroke="#fff" stroke-width="1.8"/>
<!-- gear -->
<g transform="translate(2124.5,26.3)" fill="none" stroke="#fff" stroke-width="1.75" stroke-linejoin="round">
<path d="M5.66,-2.52 L8.12,-1.73 L8.12,1.73 L5.66,2.52 L5.02,3.64 L5.55,6.17 L2.56,7.89 L0.65,6.17 L-0.65,6.17 L-2.56,7.89 L-5.55,6.17 L-5.02,3.64 L-5.66,2.52 L-8.12,1.73 L-8.12,-1.73 L-5.66,-2.52 L-5.02,-3.64 L-5.55,-6.17 L-2.56,-7.89 L-0.65,-6.17 L0.65,-6.17 L2.56,-7.89 L5.55,-6.17 L5.02,-3.64Z"/>
<circle r="2.9"/>
</g>
<!-- sidebar icon -->
<g fill="none" stroke="#1d2129" stroke-width="1.9" stroke-linejoin="round" stroke-linecap="round">
<rect x="30" y="108.8" width="21" height="21.1" rx="4.5"/>
<path d="M36 108.8 V111 Q36 113 38 113 H43 Q45 113 45 111 V108.8"/>
<path d="M36.6 120.3 L40 123.5 L43.9 118.6"/>
</g>
<!-- select chevrons -->
<g fill="none" stroke="#8a8e96" stroke-width="1.4">
<path d="M509 213 L516 220 L523 213"/>
<path d="M751 213 L758 220 L765 213"/>
<path d="M1069.5 213 L1076.5 220 L1083.5 213"/>
<path d="M1267.5 213 L1274.5 220 L1281.5 213"/>
<path d="M1481 213 L1488 220 L1495 213"/>
</g>
<g fill="none" stroke="#8c8f96" stroke-width="1.4"><circle cx="1830.8" cy="215.8" r="8"/><path d="M1836.6 221.6 L1840 225"/></g>
<!-- density icon -->
<g fill="none" stroke="#0d1117" stroke-width="1.85" stroke-linecap="round" stroke-linejoin="round">
<path d="M2139.4 335.5 V341.5 M2136.5 338.2 L2139.4 335.3 L2142.3 338.2"/>
<path d="M2139.4 344.3 V350.6 M2136.5 347.8 L2139.4 350.8 L2142.3 347.8"/>
<path d="M2144.6 336.6 H2153.4 M2147.4 343 H2153.4 M2144.6 349.2 H2153.4"/>
</g>
<!-- tiktok icons -->
<use href="#tt" x="2133" y="472" width="18" height="20"/>
<use href="#tt" x="2133.5" y="696.5" width="18" height="20"/>
<use href="#tt" x="2133.3" y="899" width="18" height="20"/>
<!-- dots -->
<g fill="#0a7d66"><circle cx="1974" cy="800.3" r="1.6"/><circle cx="1979.8" cy="800.3" r="1.6"/><circle cx="1985.6" cy="800.3" r="1.6"/></g>
<!-- arrows -->
<path d="M1849.5 679.5 L1852.8 674.3 L1935 723.5 L1941.2 717.2 L1962.8 754.5 L1960 757 L1919 750 L1918.6 746 L1922.3 741 Z" fill="#f24a47" stroke="#f24a47" stroke-width="1.5" stroke-linejoin="round"/>
<path d="M1885.9 907.8 L1888.4 905 L1946.1 943.6 L1950.7 939 L1963.8 966 L1961.8 967.8 L1933.3 960.5 L1933.4 957.2 L1936.4 955.9 Z" fill="#f24a47" stroke="#f24a47" stroke-width="1.5" stroke-linejoin="round"/>
<!-- float icon 1 -->
<g fill="none" stroke="#033d31" stroke-width="2.9" stroke-linecap="round">
<path d="M2161.5 582.5 H2194.5 M2161.5 596 H2168 M2161.5 609.5 H2174"/>
<circle cx="2184" cy="597" r="7"/><path d="M2189.2 602.2 L2195 608"/>
</g>
<!-- float icon 2 headset -->
<g fill="#22aa0c">
<path d="M2168.5 980.5 A11 11 0 0 1 2190.5 980.5" fill="none" stroke="#22aa0c" stroke-width="2.2"/>
<path d="M2190.5 980.5 A11 11 0 0 1 2179 991.5" fill="none" stroke="#22aa0c" stroke-width="2.2"/>
<ellipse cx="2165" cy="979.8" rx="3.2" ry="5"/>
<ellipse cx="2192.2" cy="979.8" rx="3.2" ry="5"/>
<rect x="2170.3" y="973.5" width="16.5" height="11.2" rx="5.4"/>
<path d="M2171.2 981 L2176.5 984 L2172.6 988.6 Z"/>
<ellipse cx="2179" cy="992.3" rx="3" ry="1.9"/>
</g>
</svg>
<div class=t style="left:287px;top:12px;font-size:21px;line-height:25px;color:#ffffff">首页</div>
<div class=t style="left:377px;top:13px;font-size:21px;line-height:25px;color:#ffffff">商品</div>
<div class=t style="left:467px;top:13px;font-size:21px;line-height:25px;color:#ffffff;font-weight:700;letter-spacing:-1.0px">订单</div>
<div class=t style="left:556px;top:13px;font-size:21px;line-height:25px;color:#ffffff;letter-spacing:1.0px">采购</div>
<div class=t style="left:646px;top:13px;font-size:21px;line-height:25px;color:#ffffff;letter-spacing:1.0px">库存</div>
<div class=t style="left:737px;top:12px;font-size:21px;line-height:25px;color:#ffffff">数据</div>
<div class=t style="left:827px;top:12px;font-size:21px;line-height:25px;color:#ffffff">营销</div>
<div class=t style="left:917px;top:12px;font-size:21px;line-height:25px;color:#ffffff">工具</div>
<div class=t style="left:1848px;top:12px;font-size:21px;line-height:25px;color:#ffffff">联系我们</div>
<div class=t style="left:2003px;top:13px;font-size:21.5px;line-height:26px;color:#ffffff;letter-spacing:1.0px">CN</div>
<div class=t style="left:70px;top:5px;font-size:37.5px;line-height:45px;color:#ffffff;font-weight:700;letter-spacing:0.833px">4Seller</div>
<div class=t style="left:69px;top:106px;font-size:21px;line-height:25px;color:#1d2129;letter-spacing:0.333px">售后管理</div>
<div class=t style="left:72px;top:172px;font-size:21px;line-height:25px;color:#0a7d66">售后单</div>
<div class=t style="left:340px;top:103px;font-size:22.5px;line-height:27px;color:#0a7d66;letter-spacing:-0.2px;-webkit-text-stroke:0.55px #0a7d66">TikTok</div>
<div class=t style="left:380px;top:206px;font-size:18px;line-height:22px;color:#1d2129;letter-spacing:0.5px">全部店铺</div>
<div class=t style="left:579px;top:206px;font-size:18px;line-height:22px;color:#1d2129;letter-spacing:-0.143px">所有退货退款类型</div>
<div class=t style="left:822px;top:206px;font-size:18px;line-height:22px;color:#1d2129;letter-spacing:-0.2px">全部售后状态</div>
<div class=t style="left:1141px;top:206px;font-size:18px;line-height:22px;color:#1d2129;letter-spacing:-0.333px">到期时间</div>
<div class=t style="left:1338px;top:206px;font-size:18px;line-height:22px;color:#1d2129;letter-spacing:0.1px">售后ID</div>
<div class=t style="left:1534px;top:206px;font-size:18px;line-height:22px;color:#8f97a3;letter-spacing:-1.0px">搜索</div>
<div class=t style="left:1927px;top:206px;font-size:18px;line-height:22px;color:#4e5969;letter-spacing:-1.0px">重置</div>
<div class=t style="left:394px;top:332px;font-size:18px;line-height:22px;color:#1d2129;font-weight:700;letter-spacing:-0.7px">全部</div>
<div class=t style="left:466px;top:331px;font-size:18px;line-height:22px;color:#4e5969;letter-spacing:-0.55px">待补发 0</div>
<div class=t style="left:564px;top:331px;font-size:18px;line-height:22px;color:#4e5969;letter-spacing:-0.633px">待退货退款 1</div>
<div class=t style="left:695px;top:331px;font-size:18px;line-height:22px;color:#4e5969;letter-spacing:-0.283px">待包裹接收 0</div>
<div class=t style="left:830px;top:331px;font-size:18px;line-height:22px;color:#4e5969;letter-spacing:-0.68px">待仅退款 1</div>
<div class=t style="left:942px;top:331px;font-size:18px;line-height:22px;color:#4e5969;letter-spacing:0.35px">已处理</div>
<div class=t style="left:1032px;top:331px;font-size:18px;line-height:22px;color:#4e5969;letter-spacing:0.4px">争议</div>
<div class=t style="left:1878px;top:329px;font-size:21px;line-height:25px;color:#4e5969;letter-spacing:0.7px">导出</div>
<div class=t style="left:2015px;top:329px;font-size:21px;line-height:25px;color:#ffffff;letter-spacing:0.7px">同步</div>
<div class=t style="left:427px;top:413px;font-size:18px;line-height:22px;color:#1d2129;font-weight:700;letter-spacing:-1.0px">商品</div>
<div class=t style="left:757px;top:413px;font-size:18px;line-height:22px;color:#1d2129;font-weight:700;letter-spacing:0.167px">售后类型/原因</div>
<div class=t style="left:1125px;top:414px;font-size:18px;line-height:22px;color:#1d2129;font-weight:700;letter-spacing:-0.4px">退款金额</div>
<div class=t style="left:1221px;top:413px;font-size:18px;line-height:22px;color:#1d2129;font-weight:700;letter-spacing:0.3px">时间</div>
<div class=t style="left:1523px;top:413px;font-size:18px;line-height:22px;color:#1d2129;font-weight:700;letter-spacing:-2.7px">状态</div>
<div class=t style="left:1971px;top:413px;font-size:18px;line-height:22px;color:#1d2129;font-weight:700;letter-spacing:-1.7px">操作</div>
<div class=t style="left:427px;top:471px;font-size:18px;line-height:22px;color:#1d2129;letter-spacing:0.452px">订单ID: 577231102657335362</div>
<div class=t style="left:756px;top:471px;font-size:18px;line-height:22px;color:#4e5969;letter-spacing:0.771px">售后ID: 4035308228221505602</div>
<div class=t style="left:1221px;top:471px;font-size:18px;line-height:22px;color:#1d2129;letter-spacing:0.571px">buyer open sandbox</div>
<div class=t style="left:427px;top:695px;font-size:18px;line-height:22px;color:#1d2129;letter-spacing:0.452px">订单ID: 577231102657335362</div>
<div class=t style="left:756px;top:695px;font-size:18px;line-height:22px;color:#4e5969;letter-spacing:0.729px">售后ID: 4035308221489123394</div>
<div class=t style="left:1221px;top:695px;font-size:18px;line-height:22px;color:#1d2129;letter-spacing:0.571px">buyer open sandbox</div>
<div class=t style="left:427px;top:898px;font-size:18px;line-height:22px;color:#1d2129;letter-spacing:0.713px">订单ID: 577244944457699394</div>
<div class=t style="left:756px;top:898px;font-size:18px;line-height:22px;color:#4e5969;letter-spacing:0.704px">售后ID: 4035308215642198082</div>
<div class=t style="left:1221px;top:898px;font-size:18px;line-height:22px;color:#1d2129;letter-spacing:0.571px">buyer open sandbox</div>
<div class=t style="left:2022px;top:898px;font-size:18px;line-height:22px;color:#1d2129;letter-spacing:1.0px">hjz-test-us</div>
<div class=t style="left:476px;top:531px;font-size:18px;line-height:22px;color:#1d2129;letter-spacing:0.02px">CODE FLORIST 2200 PCS Silk</div>
<div class=t style="left:476px;top:552px;font-size:18px;line-height:22px;color:#1d2129;letter-spacing:0.392px">Flower Rose Petals for...</div>
<div class=t style="left:476px;top:582px;font-size:18px;line-height:22px;color:#86909c;letter-spacing:0.412px">Baby Purple, Separated 1100</div>
<div class=t style="left:476px;top:603px;font-size:18px;line-height:22px;color:#86909c;letter-spacing:1.25px">pcs</div>
<div class=t style="left:476px;top:634px;font-size:18px;line-height:22px;color:#86909c;letter-spacing:0.081px">店铺SKU: B0C73WRZX7</div>
<div class=t style="left:755px;top:540px;font-size:18px;line-height:22px;color:#86909c;letter-spacing:0.35px">原因:</div>
<div class=t style="left:806px;top:541px;font-size:18px;line-height:22px;color:#86909c;letter-spacing:0.511px">Wrong item was sent</div>
<div class=t style="left:1119px;top:531px;font-size:18px;line-height:22px;color:#1d2129;letter-spacing:-0.086px">9.14 USD</div>
<div class=t style="left:1222px;top:534px;font-size:18px;line-height:22px;color:#86909c;letter-spacing:-0.15px">创建:</div>
<div class=t style="left:1311px;top:535px;font-size:18px;line-height:22px;color:#1d2129;letter-spacing:0.915px">12-30-25 08:20</div>
<div class=t style="left:1221px;top:567px;font-size:18px;line-height:22px;color:#86909c;letter-spacing:0.35px">更新:</div>
<div class=t style="left:1311px;top:567px;font-size:18px;line-height:22px;color:#1d2129;letter-spacing:1.062px">01-04-26 06:58</div>
<div class=t style="left:1222px;top:599px;font-size:18px;line-height:22px;color:#86909c;letter-spacing:-0.25px">最晚处理:</div>
<div class=t style="left:1312px;top:599px;font-size:18px;line-height:22px;color:#1d2129">-</div>
<div class=t style="left:1521px;top:534px;font-size:18px;line-height:22px;color:#1d2129;letter-spacing:0.2px">售后:</div>
<div class=t style="left:1566px;top:533px;font-size:18px;line-height:22px;color:#1d2129;letter-spacing:0.504px">Awaiting exchange package</div>
<div class=t style="left:1522px;top:566px;font-size:18px;line-height:22px;color:#86909c;letter-spacing:-0.3px">订单:</div>
<div class=t style="left:1564px;top:566px;font-size:18px;line-height:22px;color:#86909c;letter-spacing:-0.15px">已发货</div>
<div class=t style="left:1632px;top:565px;font-size:18px;line-height:22px;color:#86909c;letter-spacing:0.692px">Vtural2930433207278211138</div>
<div class=t style="left:476px;top:755px;font-size:18px;line-height:22px;color:#1d2129;letter-spacing:0.358px">101 tours de dressage: Pour</div>
<div class=t style="left:476px;top:776px;font-size:18px;line-height:22px;color:#1d2129;letter-spacing:0.543px">stimuler votre chien,...</div>
<div class=t style="left:476px;top:807px;font-size:18px;line-height:22px;color:#86909c;letter-spacing:0.75px">Default</div>
<div class=t style="left:476px;top:838px;font-size:18px;line-height:22px;color:#86909c;letter-spacing:0.225px">店铺SKU: B0756D91X3</div>
<div class=t style="left:757px;top:758px;font-size:18px;line-height:22px;color:#1d2129;letter-spacing:-0.1px">补发</div>
<div class=t style="left:755px;top:790px;font-size:18px;line-height:22px;color:#86909c;letter-spacing:0.35px">原因:</div>
<div class=t style="left:806px;top:791px;font-size:18px;line-height:22px;color:#86909c;letter-spacing:0.511px">Wrong item was sent</div>
<div class=t style="left:1104px;top:755px;font-size:18px;line-height:22px;color:#1d2129;letter-spacing:0.562px">23.06 USD</div>
<div class=t style="left:1222px;top:758px;font-size:18px;line-height:22px;color:#86909c;letter-spacing:-0.15px">创建:</div>
<div class=t style="left:1311px;top:759px;font-size:18px;line-height:22px;color:#1d2129;letter-spacing:0.831px">12-30-25 07:05</div>
<div class=t style="left:1221px;top:791px;font-size:18px;line-height:22px;color:#86909c;letter-spacing:0.35px">更新:</div>
<div class=t style="left:1311px;top:791px;font-size:18px;line-height:22px;color:#1d2129;letter-spacing:0.785px">12-30-25 08:18</div>
<div class=t style="left:1222px;top:823px;font-size:18px;line-height:22px;color:#86909c;letter-spacing:-0.25px">最晚处理:</div>
<div class=t style="left:1312px;top:823px;font-size:18px;line-height:22px;color:#1d2129">-</div>
<div class=t style="left:1521px;top:758px;font-size:18px;line-height:22px;color:#1d2129;letter-spacing:0.2px">售后:</div>
<div class=t style="left:1566px;top:757px;font-size:18px;line-height:22px;color:#1d2129;letter-spacing:0.518px">Awaiting replacement approval</div>
<div class=t style="left:1522px;top:790px;font-size:18px;line-height:22px;color:#86909c;letter-spacing:-0.3px">订单:</div>
<div class=t style="left:1564px;top:790px;font-size:18px;line-height:22px;color:#86909c;letter-spacing:-0.15px">已发货</div>
<div class=t style="left:1632px;top:789px;font-size:18px;line-height:22px;color:#86909c;letter-spacing:0.692px">Vtural2930433207278211138</div>
<div class=t style="left:1971px;top:755px;font-size:18px;line-height:22px;color:#0a7d66;letter-spacing:0.1px">同意补发</div>
<div class=t style="left:478px;top:958px;font-size:18px;line-height:22px;color:#1d2129;letter-spacing:0.748px">Alei226 - T-Shirt Naruto</div>
<div class=t style="left:476px;top:978px;font-size:18px;line-height:22px;color:#1d2129;letter-spacing:0.477px">Uzumaki pour hommes,...</div>
<div class=t style="left:476px;top:1010px;font-size:18px;line-height:22px;color:#86909c;letter-spacing:-0.221px">BLEU CLAIR, LRG SIZE</div>
<div class=t style="left:476px;top:1041px;font-size:18px;line-height:22px;color:#86909c;letter-spacing:0.119px">店铺SKU: LIGHT BLUE-L...</div>
<div class=t style="left:756px;top:962px;font-size:18px;line-height:22px;color:#1d2129;letter-spacing:0.267px">退货退款</div>
<div class=t style="left:755px;top:993px;font-size:18px;line-height:22px;color:#86909c;letter-spacing:0.35px">原因:</div>
<div class=t style="left:805px;top:994px;font-size:18px;line-height:22px;color:#86909c;letter-spacing:0.538px">Fabric, material or style</div>
<div class=t style="left:756px;top:1015px;font-size:18px;line-height:22px;color:#86909c;letter-spacing:0.771px">not as expected</div>
<div class=t style="left:1106px;top:958px;font-size:18px;line-height:22px;color:#1d2129;letter-spacing:0.412px">38.37 USD</div>
<div class=t style="left:1222px;top:961px;font-size:18px;line-height:22px;color:#86909c;letter-spacing:-0.15px">创建:</div>
<div class=t style="left:1311px;top:962px;font-size:18px;line-height:22px;color:#1d2129;letter-spacing:1.023px">12-30-25 05:49</div>
<div class=t style="left:1221px;top:994px;font-size:18px;line-height:22px;color:#86909c;letter-spacing:0.35px">更新:</div>
<div class=t style="left:1311px;top:994px;font-size:18px;line-height:22px;color:#1d2129;letter-spacing:1.077px">01-08-26 05:49</div>
<div class=t style="left:1222px;top:1026px;font-size:18px;line-height:22px;color:#86909c;letter-spacing:-0.25px">最晚处理:</div>
<div class=t style="left:1312px;top:1026px;font-size:18px;line-height:22px;color:#1d2129">-</div>
<div class=t style="left:1521px;top:961px;font-size:18px;line-height:22px;color:#1d2129;letter-spacing:0.2px">售后:</div>
<div class=t style="left:1565px;top:961px;font-size:18px;line-height:22px;color:#1d2129;letter-spacing:0.523px">Request closed</div>
<div class=t style="left:1522px;top:993px;font-size:18px;line-height:22px;color:#86909c;letter-spacing:-0.3px">订单:</div>
<div class=t style="left:1566px;top:993px;font-size:18px;line-height:22px;color:#86909c;letter-spacing:-0.15px">运输中</div>
<div class=t style="left:1630px;top:992px;font-size:18px;line-height:22px;color:#86909c;letter-spacing:0.893px">8363255249754155</div>
<div class=t style="left:1971px;top:958px;font-size:18px;line-height:22px;color:#0a7d66;letter-spacing:0.06px">查看退货记录</div>
<div class=t style="left:459px;top:523px;font-size:17px;line-height:20px;color:#ffffff;font-weight:700">1</div>
<div class=t style="left:459px;top:747px;font-size:17px;line-height:20px;color:#ffffff;font-weight:700">1</div>
<div class=t style="left:458px;top:950px;font-size:17.5px;line-height:21px;color:#ffffff;font-weight:700">4</div>
</body></html>
